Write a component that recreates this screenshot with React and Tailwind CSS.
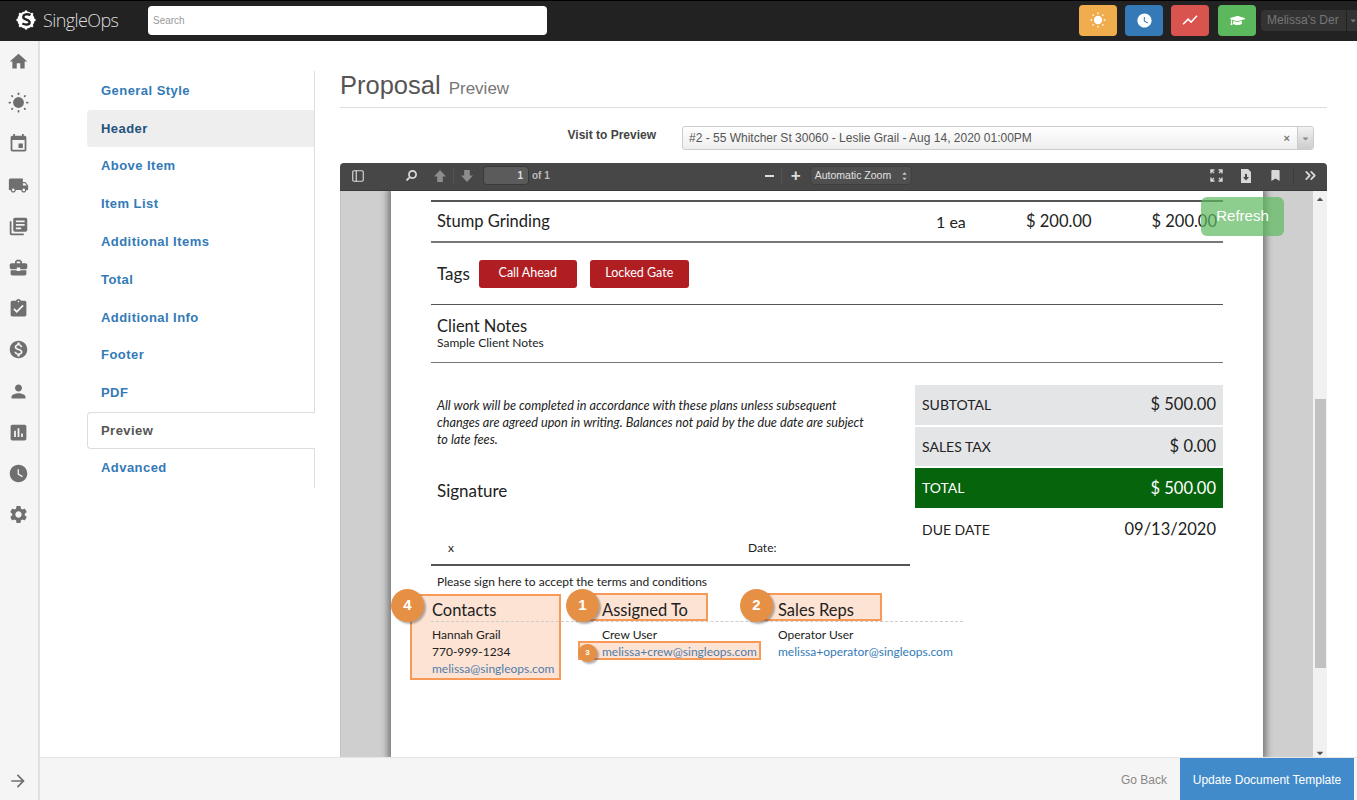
import { FaBookmark, FaCaretDown, FaCaretUp, FaGraduationCap, FaSearch } from 'react-icons/fa';
import {
    MdHome, MdEvent, MdLocalShipping, MdLibraryBooks, MdBusinessCenter, MdAssignmentTurnedIn,
    MdMonetizationOn, MdPerson, MdAssessment, MdWatchLater, MdSettings, MdArrowForward, MdShowChart,
} from 'react-icons/md';
import { ChevronsRight, PanelLeft } from 'lucide-react';

const SunIcon = ({ size }) => (
    <svg width={size} height={size} viewBox="0 0 24 24" fill="currentColor" stroke="currentColor" strokeLinecap="round">
        <circle cx="12" cy="12" r="6.200" stroke="none" />
        <g strokeWidth="2">
            <line x1="12" y1="1.500" x2="12" y2="2.500" />
            <line x1="12" y1="21.500" x2="12" y2="22.500" />
            <line x1="1.500" y1="12" x2="2.500" y2="12" />
            <line x1="21.500" y1="12" x2="22.500" y2="12" />
            <line x1="4.500" y1="4.500" x2="5" y2="5" />
            <line x1="19" y1="19" x2="19.500" y2="19.500" />
            <line x1="19.500" y1="4.500" x2="19" y2="5" />
            <line x1="5" y1="19" x2="4.500" y2="19.500" />
        </g>
    </svg>
);

const sideIcons = [
    MdHome, SunIcon, MdEvent, MdLocalShipping, MdLibraryBooks, MdBusinessCenter,
    MdAssignmentTurnedIn, MdMonetizationOn, MdPerson, MdAssessment, MdWatchLater, MdSettings,
];

const navItems = [
    'General Style', 'Header', 'Above Item', 'Item List', 'Additional Items', 'Total',
    'Additional Info', 'Footer', 'PDF', 'Preview', 'Advanced',
];

const Logo = () => (
    <svg width="22" height="20" viewBox="0 0 24 22">
        <circle cx="12" cy="11" r="9.500" fill="white" />
        <g stroke="white" strokeWidth="2.400">
            <line x1="12" y1="0.500" x2="12" y2="21.500" />
            <line x1="1.500" y1="11" x2="22.500" y2="11" />
            <line x1="4.500" y1="3.500" x2="19.500" y2="18.500" />
            <line x1="19.500" y1="3.500" x2="4.500" y2="18.500" />
        </g>
        <path d="M17 5.500c-3-1.600-8-1-8 2.200 0 3.400 7 2.600 7 6 0 2.600-4.500 3-8 1.200" fill="none" stroke="#222" strokeWidth="2.600" />
    </svg>
);

const TopBar = () => (
    <header className="flex items-center h-[41px] pb-[2px] bg-[#222] border-t border-black shrink-0">
        <div className="flex items-center w-[148px] pl-[15px] gap-[6px]">
            <Logo />
            <span className="font-['Open_Sans',sans-serif] font-light text-[18px] tracking-[-0.6px] text-[#ddd]">SingleOps</span>
        </div>
        <div className="flex items-center w-[399px] h-[29px] pl-[5px] bg-white rounded text-[10px] text-[#999]">Search</div>
        <div className="flex items-center ml-auto">
            <button className="flex items-center justify-center w-[38px] h-[31px] mr-2 rounded bg-[#f0ad4e] text-white"><SunIcon size={16} /></button>
            <button className="flex items-center justify-center w-[38px] h-[31px] mr-2 rounded bg-[#337ab7] text-white"><MdWatchLater size={17} /></button>
            <button className="flex items-center justify-center w-[38px] h-[31px] mr-[9px] rounded bg-[#d9534f] text-white"><MdShowChart size={18} /></button>
            <button className="flex items-center justify-center w-[38px] h-[31px] mr-[5px] rounded bg-[#5cb85c] text-white"><FaGraduationCap size={15} /></button>
            <div className="flex items-center w-[96px] shrink-0 h-[21px] rounded-l bg-[#333] text-[12px] whitespace-nowrap text-[#777]">
                <span className="pl-[6px] pr-[7px] border-r border-[#222] leading-[21px]">Melissa's Der</span>
                <FaCaretDown size={9} className="ml-[2px]" />
            </div>
        </div>
    </header>
);

const SideBar = () => (
    <aside className="flex flex-col items-center w-[40px] shrink-0 bg-[#f5f5f5] border-r-2 border-[#dfe1e4] pr-[2px]">
        {sideIcons.map((Icon, i) => (
            <div key={i} className="flex items-center justify-center h-[41.200px] text-[#6f6f6f]">
                <Icon size={21} />
            </div>
        ))}
        <div className="mt-auto mb-[9px] text-[#6f6f6f]"><MdArrowForward size={20} /></div>
    </aside>
);

const SettingsNav = () => (
    <nav className="w-[228px] h-[417px] mt-[30px] ml-[47px] shrink-0 border-r border-[#ddd] font-bold text-[13px] tracking-[0.45px] text-[#337ab7]">
        <div className="h-[1px]" />
        {navItems.map((item) => {
            if (item === 'Header') {
                return <div key={item} className="h-[37.600px] pl-[14px] leading-[37px] bg-[#eee] rounded-l text-[#23527c]">{item}</div>;
            }
            if (item === 'Preview') {
                return <div key={item} className="relative w-[228px] h-[37px] pl-[13px] leading-[36px] bg-white border border-r-0 border-[#ddd] rounded-l text-[#555]">{item}</div>;
            }
            return <div key={item} className="h-[37.800px] pl-[14px] leading-[38px]">{item}</div>;
        })}
    </nav>
);

const FatArrow = ({ down }) => (
    <svg width="14" height="14" viewBox="0 0 14 14" fill="#8d8d8d" className={down ? 'rotate-180' : ''}>
        <path d="M7 1l6 6.500H9.800V13H4.200V7.500H1z" />
    </svg>
);

const PdfToolbar = () => (
    <div className="flex items-center h-[28px] pb-[2px] shrink-0 bg-[#474747] rounded-t border-b border-[#3a3a3a] text-[#d8d8d8]">
        <PanelLeft size={14} className="ml-[11px]" />
        <FaSearch size={11} className="ml-[41px] -scale-x-100" />
        <div className="ml-[16px]"><FatArrow /></div>
        <div className="w-px h-[14px] ml-[6px] bg-[#555]" />
        <div className="ml-[6px]"><FatArrow down /></div>
        <div className="w-[46px] h-[19px] ml-[9px] pr-[5px] bg-[#5b5b5b] border border-[#3a3a3a] rounded-sm text-right text-[10px] font-bold leading-[17px] text-[#ddd]">1</div>
        <span className="ml-[3px] text-[10px] font-bold text-[#bbb]">of 1</span>
        <div className="w-[17px] h-[2px] ml-[211px] flex justify-center"><div className="w-[9px] h-[2px] bg-[#ddd]" /></div>
        <div className="w-px h-[14px] ml-[3px] bg-[#555]" />
        <span className="ml-[9px] text-[17px] leading-none font-bold text-[#ddd]">+</span>
        <div className="flex items-center w-[102px] h-[19px] ml-[9px] pl-[4px] bg-[#4f4f4f] border border-[#3f3f3f] rounded-sm text-[10.500px] text-[#e2e2e2]">
            Automatic Zoom
            <span className="flex flex-col ml-auto mr-[3px] text-[#ccc]">
                <FaCaretUp size={7} className="-mb-[2px]" />
                <FaCaretDown size={7} />
            </span>
        </div>
        <svg width="13" height="13" viewBox="0 0 13 13" className="ml-auto" fill="none" stroke="#d8d8d8" strokeWidth="1.400">
            <path d="M1 4.500V1h3.500M1 1l3 3M12 4.500V1H8.500M12 1L9 4M1 8.500V12h3.500M1 12l3-3M12 8.500V12H8.500M12 12L9 9" />
        </svg>
        <svg width="12" height="14" viewBox="0 0 12 14" className="ml-[17px]" fill="#d8d8d8">
            <path d="M1 0h7l3 3v11H1z" />
            <path d="M5 5h2v3h2l-3 3.500L3 8h2z" fill="#474747" />
        </svg>
        <FaBookmark size={11} className="ml-[18px]" />
        <div className="w-px h-[14px] ml-[12px] bg-[#3a3a3a]" />
        <ChevronsRight size={17} strokeWidth={2.500} className="ml-[8px] mr-[8px]" />
    </div>
);

const SummaryRow = ({ label, value, className }) => (
    <div className={`flex items-center justify-between h-[39.600px] mb-[2px] px-[7px] ${className}`}>
        <span className="text-[14px]">{label}</span>
        <span className="text-[16.500px]">{value}</span>
    </div>
);

const Badge = ({ n, className }) => (
    <div className={`absolute flex items-center justify-center rounded-full bg-[#e69046] shadow-[2px_2px_2px_rgba(0,0,0,0.3)] font-['Liberation_Sans',sans-serif] font-bold text-white ${className}`}>
        {n}
    </div>
);

const PeopleBlock = () => (
    <div className="relative h-[120px]">
        {/* tutorial highlights sit behind the text */}
        <div className="absolute left-[-21px] top-0 w-[151px] h-[86px] bg-[#fde3d3] border-2 border-[#f79a58]" />
        <div className="absolute left-[158px] top-[-1px] w-[119px] h-[28px] bg-[#fde3d3] border-2 border-[#f79a58]" />
        <div className="absolute left-[147px] top-[47px] w-[183px] h-[19px] bg-[#fde3d3] border-2 border-[#f79a58]" />
        <div className="absolute left-[332px] top-[-1px] w-[119px] h-[28px] bg-[#fde3d3] border-2 border-[#f79a58]" />
        {/* dashed rule under the three headings */}
        <div className="absolute left-0 top-[27px] w-[532px] border-t border-dashed border-[#ccc]" />
        <div className="relative flex pt-[1px] pl-[1px]">
            <div className="w-[170px]">
                <div className="h-[27px] text-[16.500px] leading-[30px]">Contacts</div>
                <div className="mt-[4px] text-[12px] leading-[17px]">Hannah Grail</div>
                <div className="text-[12px] leading-[17px]">770-999-1234</div>
                <div className="text-[12px] leading-[18px] text-[#4f7cab]">melissa@singleops.com</div>
            </div>
            <div className="w-[176px]">
                <div className="h-[27px] text-[16.500px] leading-[30px]">Assigned To</div>
                <div className="mt-[4px] text-[12px] leading-[17px]">Crew User</div>
                <div className="text-[12px] leading-[17px] text-[#4f7cab]">melissa+crew@singleops.com</div>
            </div>
            <div>
                <div className="h-[27px] text-[16.500px] leading-[30px]">Sales Reps</div>
                <div className="mt-[4px] text-[12px] leading-[17px]">Operator User</div>
                <div className="text-[12px] leading-[17px] text-[#337ab7]">melissa+operator@singleops.com</div>
            </div>
        </div>
        <Badge n="4" className="left-[-40px] top-[-5px] w-[33px] h-[33px] text-[15px]" />
        <Badge n="1" className="left-[135px] top-[-5px] w-[33px] h-[33px] text-[15px]" />
        <Badge n="2" className="left-[309px] top-[-5px] w-[33px] h-[33px] text-[15px]" />
        <Badge n="3" className="left-[147px] top-[50px] w-[19px] h-[18px] text-[8px]" />
    </div>
);

const PdfPage = () => (
    <div className="flex-1 px-[40px] pt-[9px] bg-white shadow-[0_0_7px_3px_rgba(0,0,0,0.45)] font-['Lato',sans-serif] text-[#222]">
        <div className="flex items-center h-[43px] pl-[6px] pr-[6px] border-t-2 border-b-2 border-t-[#555] border-b-[#777] text-[16.500px]">
            <span className="w-[499px]">Stump Grinding</span>
            <span className="w-[90px] text-[16px]">1 ea</span>
            <span>$ 200.00</span>
            <span className="ml-auto">$ 200.00</span>
        </div>
        <div className="flex items-center h-[62px] pl-[6px] border-b border-[#555]">
            <span className="text-[17px]">Tags</span>
            <span className="flex items-center justify-center w-[98px] h-[28px] ml-[9px] rounded-[3px] bg-[#b01e22] text-[12.500px] text-white">Call Ahead</span>
            <span className="flex items-center justify-center w-[99px] h-[28px] ml-[13px] rounded-[3px] bg-[#b01e22] text-[12.500px] text-white">Locked Gate</span>
        </div>
        <div className="h-[58px] pl-[6px] pt-[12px] border-b border-[#777]">
            <div className="text-[16.500px] leading-[18px]">Client Notes</div>
            <div className="text-[12px] leading-[15px]">Sample Client Notes</div>
        </div>
        <div className="flex pt-[22px]">
            <div className="w-[479px] shrink-0">
                <p className="w-[433px] ml-[6px] pt-[12px] italic text-[12.700px] leading-[17px]">
                    All work will be completed in accordance with these plans unless subsequent changes are agreed upon in writing. Balances not paid by the due date are subject to late fees.
                </p>
                <div className="ml-[6px] mt-[33px] text-[17px] leading-[20px]">Signature</div>
                <div className="flex items-center h-[35px] mt-[30px] pl-[17px] border-b-2 border-[#555] text-[12px]">
                    <span className="w-[300px]">x</span>
                    <span>Date:</span>
                </div>
                <div className="ml-[6px] mt-[8px] text-[12px] leading-[16px]">Please sign here to accept the terms and conditions</div>
            </div>
            <div className="flex-1 ml-[5px]">
                <SummaryRow label="SUBTOTAL" value="$ 500.00" className="bg-[#e4e5e7]" />
                <SummaryRow label="SALES TAX" value="$ 0.00" className="bg-[#e4e5e7]" />
                <SummaryRow label="TOTAL" value="$ 500.00" className="bg-[#06640c] text-white" />
                <SummaryRow label="DUE DATE" value="09/13/2020" />
            </div>
        </div>
        <div className="mt-[4px]">
            <PeopleBlock />
        </div>
    </div>
);

const PdfScrollbar = () => (
    <div className="flex flex-col items-center w-[14px] shrink-0 bg-[#f1f1f1] text-[#555]">
        <FaCaretUp size={10} className="mt-[3px]" />
        <div className="w-[11px] h-[269px] mt-[195px] bg-[#c1c1c1]" />
        <FaCaretDown size={10} className="mt-auto -mb-[1px]" />
    </div>
);

const PdfViewer = () => (
    <div className="relative flex flex-col h-[594px] mt-[13px]">
        <PdfToolbar />
        <div className="flex flex-1 min-h-0 overflow-hidden bg-[#cfcfcf] border-l border-[#c4c4c4]">
            <div className="flex flex-1 min-w-0 px-[50px]">
                <PdfPage />
            </div>
            <PdfScrollbar />
        </div>
        <button className="absolute left-[861px] top-[34px] w-[83px] h-[39px] rounded-md bg-[#5cb85c]/70 text-[15px] text-white">Refresh</button>
    </div>
);

export default function App() {
    return (
        <div className="flex flex-col h-screen overflow-hidden bg-white font-['Liberation_Sans',sans-serif]">
            <TopBar />
            <div className="flex flex-1 min-h-0">
                <SideBar />
                <div className="flex flex-col flex-1 min-w-0">
                    <div className="flex flex-1 min-h-0">
                        <SettingsNav />
                        <main className="flex-1 min-w-0 pl-[25px] pr-[30px]">
                            <div className="flex items-baseline h-[38px] mt-[29px] border-b border-[#ddd] text-[#555]">
                                <h1 className="text-[25.500px] leading-[30px]">Proposal</h1>
                                <span className="ml-[8px] text-[17px] text-[#777]">Preview</span>
                            </div>
                            <div className="flex items-center mt-[18px]">
                                <label className="w-[317px] mb-[6px] pr-[1px] text-right font-bold text-[12px] text-[#444]">Visit to Preview</label>
                                <div className="flex items-center w-[632px] h-[24px] ml-[25px] pl-[6px] rounded-[3px] border border-[#ccc] bg-gradient-to-b from-white to-[#eee] text-[12px] text-[#555]">
                                    <span>#2 - 55 Whitcher St 30060 - Leslie Grail - Aug 14, 2020 01:00PM</span>
                                    <span className="ml-auto mr-[7px] font-bold text-[11px] text-[#777]">×</span>
                                    <span className="flex items-center justify-center w-[16px] h-full bg-gradient-to-b from-[#f2f2f2] to-[#ccc] border-l border-[#ccc] text-[#888] rounded-r-[3px]">
                                        <FaCaretDown size={9} />
                                    </span>
                                </div>
                            </div>
                            <PdfViewer />
                        </main>
                    </div>
                    <footer className="flex items-stretch justify-end h-[43px] shrink-0 bg-[#f5f5f5] border-t border-[#e5e5e5] pr-[3px]">
                        <span className="self-center mt-[2px] mr-[13px] text-[12px] text-[#888]">Go Back</span>
                        <button className="w-[174px] pt-[2px] bg-[#428bca] text-[12px] text-white">Update Document Template</button>
                    </footer>
                </div>
            </div>
        </div>
    );
}
